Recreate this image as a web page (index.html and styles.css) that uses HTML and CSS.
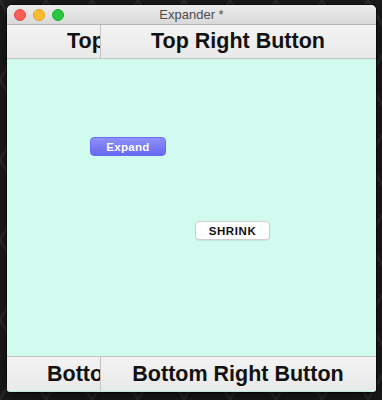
FILE: index.html
```html
<!DOCTYPE html>
<html>
<head>
<meta charset="utf-8">
<link rel="stylesheet" href="styles.css">
</head>
<body>
<div class="desktop">
  <div class="window">
    <div class="titlebar">
      <div class="lights">
        <span class="light red"></span>
        <span class="light yellow"></span>
        <span class="light green"></span>
      </div>
      <div class="title">Expander *</div>
    </div>
    <div class="row top">
      <div class="cell left top-left"><span class="clip">Top Left Button</span></div>
      <div class="cell right"><span>Top Right Button</span></div>
    </div>
    <div class="canvas">
      <button class="btn expand">Expand</button>
      <button class="btn shrink">SHRINK</button>
    </div>
    <div class="row bottom">
      <div class="cell left bottom-left"><span class="clip">Bottom Left Button</span></div>
      <div class="cell right"><span>Bottom Right Button</span></div>
    </div>
  </div>
</div>
</body>
</html>
```
FILE: styles.css
```css
html, body {
  margin: 0;
  padding: 0;
  width: 382px;
  height: 400px;
  overflow: hidden;
}
body {
  background-color: #1b1b1b;
  background-image:
    linear-gradient(60deg, transparent 48%, #2c2c2c 49%, #2c2c2c 51%, transparent 52%),
    linear-gradient(-60deg, transparent 48%, #2c2c2c 49%, #2c2c2c 51%, transparent 52%);
  background-size: 46px 80px;
  font-family: "Liberation Sans", Arial, sans-serif;
}
.desktop {
  padding: 5px 0 0 7px;
}
.window {
  width: 369px;
  height: 387px;
  display: flex;
  flex-direction: column;
  border-radius: 5px 5px 3px 3px;
  overflow: hidden;
  background: #d1fbee;
  box-shadow: 0 0 0 1px rgba(0,0,0,0.5), 0 6px 18px rgba(0,0,0,0.6);
  border-bottom: 1px solid #bfe9dc;
  box-sizing: border-box;
}
.titlebar {
  height: 19px;
  flex: none;
  display: flex;
  align-items: center;
  position: relative;
  background: linear-gradient(#ececec, #d9d9d9);
  border-bottom: 1px solid #b4b4b4;
}
.lights {
  display: flex;
  gap: 7px;
  padding-left: 7px;
}
.light {
  width: 12px;
  height: 12px;
  border-radius: 50%;
  box-sizing: border-box;
}
.red { background: #fc5f57; border: 1px solid #de4a42; }
.yellow { background: #fdbc2e; border: 1px solid #dea123; }
.green { background: #28c840; border: 1px solid #1fad2f; }
.title {
  position: absolute;
  left: 0;
  right: 0;
  top: 0;
  bottom: 0;
  text-align: center;
  line-height: 19px;
  font-size: 13px;
  color: #4c4c4c;
  font-family: "Liberation Sans", Arial, sans-serif;
  pointer-events: none;
}
.row {
  display: flex;
  flex: none;
  height: 33px;
  background: linear-gradient(#f3f3f3, #e9e9e9);
}
.row.top {
  border-bottom: 1px solid #c2c2c2;
}
.row.bottom {
  border-top: 1px solid #c2c2c2;
  height: 34px;
}
.cell {
  display: flex;
  align-items: center;
  overflow: hidden;
  white-space: nowrap;
  font-weight: bold;
  font-size: 21.5px;
  color: #111;
}
.cell.left {
  width: 94px;
  flex: none;
  border-right: 1px solid #c2c2c2;
  box-sizing: border-box;
}
.clip {
  display: block;
  overflow: hidden;
  white-space: nowrap;
}
.top-left { padding-left: 60px; }
.top-left .clip { width: 33px; }
.bottom-left { padding-left: 40px; }
.bottom-left .clip { width: 53px; }
.cell.right {
  flex: 1;
  justify-content: center;
  padding-right: 1px;
}
.canvas {
  flex: 1;
  background: #d1fbee;
  display: flex;
  flex-direction: column;
  align-items: flex-start;
}
.btn {
  display: block;
  height: 19px;
  width: 76px;
  padding: 0;
  font-family: "Liberation Sans", Arial, sans-serif;
  font-weight: bold;
  font-size: 11.5px;
  border-radius: 4px;
  cursor: default;
}
.expand {
  margin: 78px 0 0 83px;
  color: #ffffff;
  background: linear-gradient(#8f91fc, #6668f4);
  border: 1px solid #6a6cf0;
  letter-spacing: 0.3px;
}
.shrink {
  margin: 65px 0 0 188px;
  width: 75px;
  color: #111;
  background: #ffffff;
  border: 1px solid #cfcfcf;
  letter-spacing: 0.6px;
  box-shadow: 0 1px 1px rgba(0,0,0,0.08);
}
```
